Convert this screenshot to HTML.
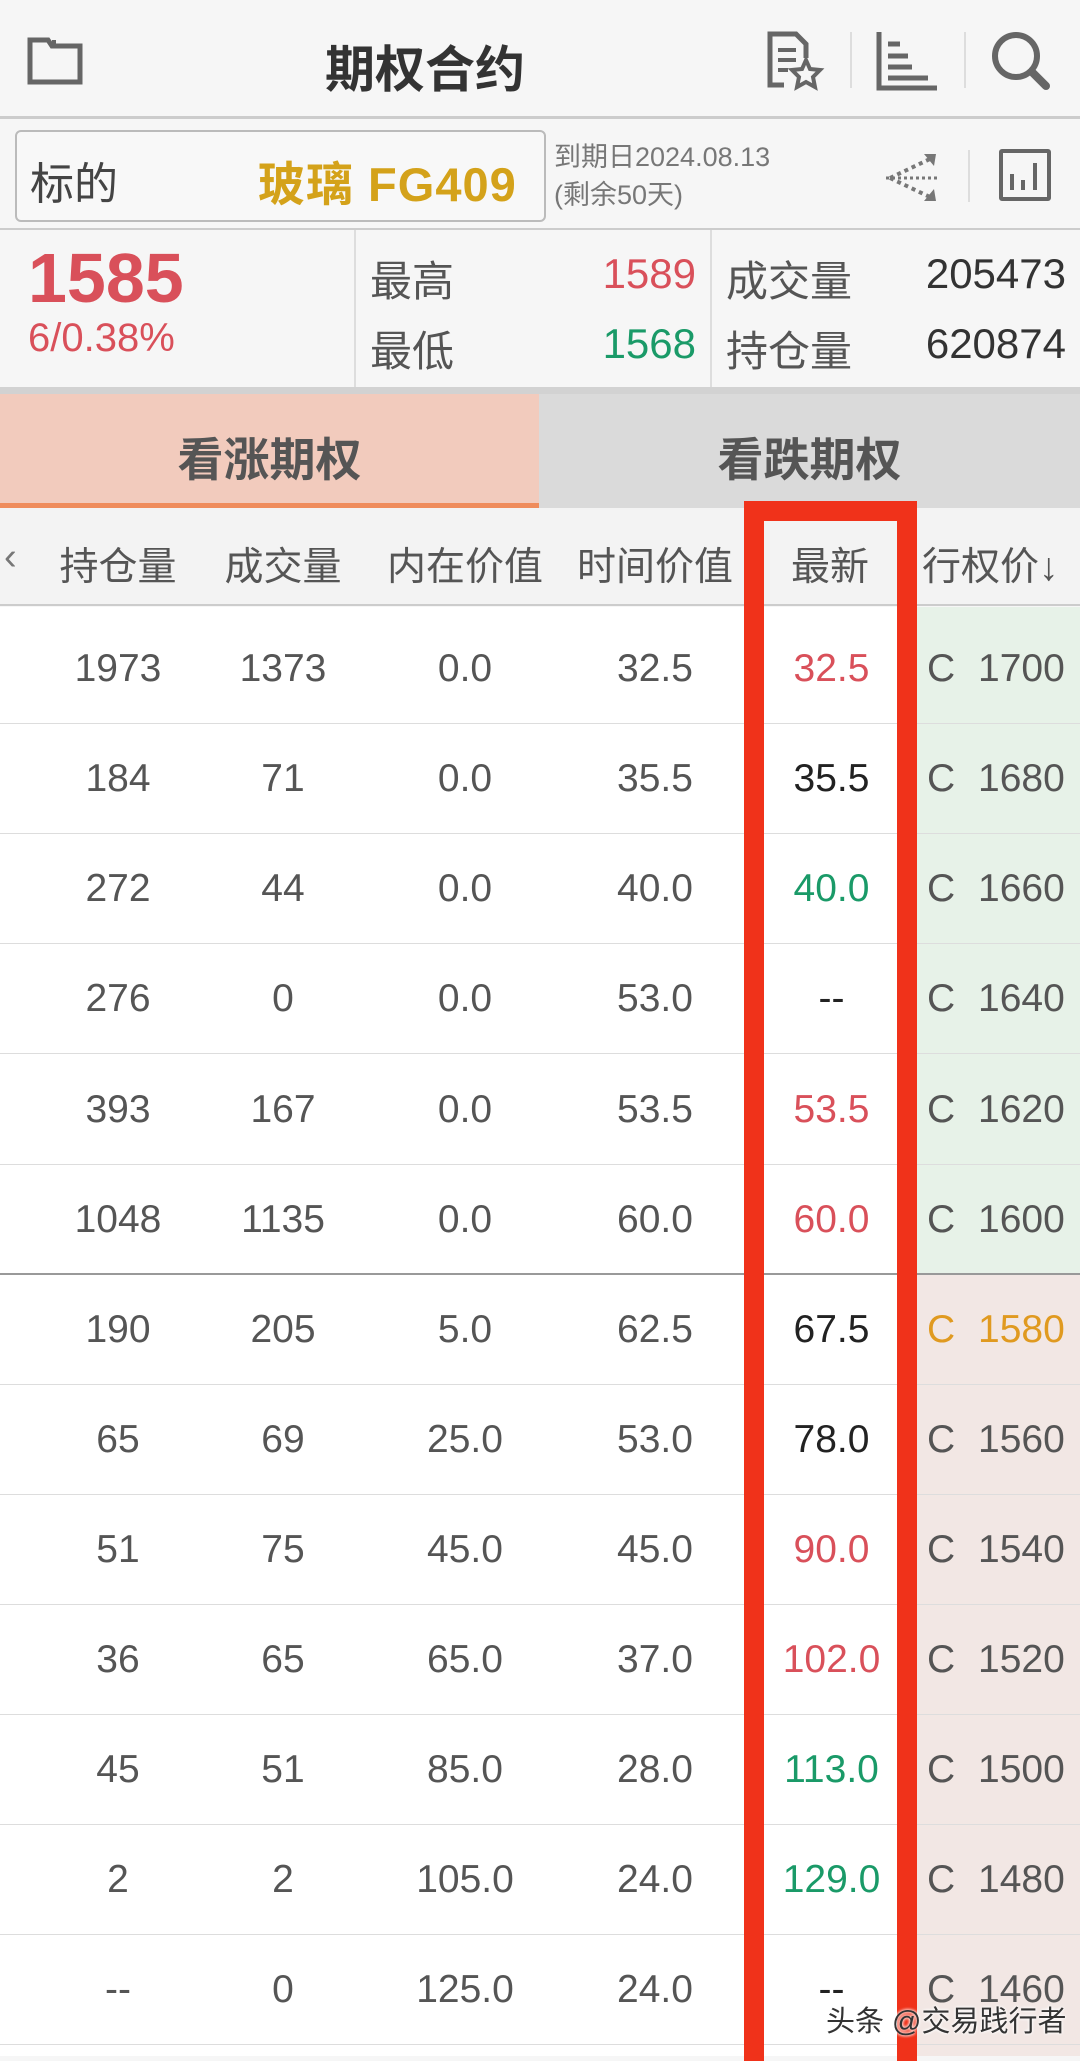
<!DOCTYPE html>
<html><head><meta charset="utf-8"><style>
*{margin:0;padding:0;box-sizing:border-box}
body{width:1080px;height:2056px;background:#f6f6f6;font-family:"Liberation Sans","Noto Sans CJK SC",sans-serif;color:#555;position:relative;overflow:hidden}
.a{position:absolute}
.c{position:absolute;text-align:center;white-space:nowrap}
.row{position:absolute;left:0;width:1080px;height:110px;border-bottom:1.5px solid #ddd;font-size:39px}
.row div{position:absolute;top:0;line-height:110px;text-align:center}
.r{color:#d9505a}.g{color:#1a9a68}.k{color:#222}
</style></head><body>
<!-- header -->
<svg class="a" style="left:26px;top:34px" width="60" height="52" viewBox="0 0 60 52"><path d="M4 6h18l4 6h28v36H4z" fill="none" stroke="#666" stroke-width="5"/><path d="M28 6v8" stroke="#666" stroke-width="4"/></svg>
<div class="c" style="left:0;width:850px;top:30px;font-size:50px;font-weight:bold;color:#333">期权合约</div>
<svg class="a" style="left:766px;top:30px" width="60" height="62" viewBox="0 0 60 62"><path d="M18 55H4V4h26l10 10v14" fill="none" stroke="#666" stroke-width="5"/><path d="M12 20h18M12 30h18M12 40h10" stroke="#666" stroke-width="4"/><path d="M40 30l4 9 10 1-7 7 2 10-9-5-9 5 2-10-7-7 10-1z" fill="none" stroke="#666" stroke-width="4"/></svg>
<div class="a" style="left:850px;top:32px;width:2px;height:56px;background:#ddd"></div>
<svg class="a" style="left:876px;top:30px" width="62" height="62" viewBox="0 0 62 62"><path d="M3 2v56h58" fill="none" stroke="#666" stroke-width="5"/><path d="M12 14h12M12 26h20M12 37h24M12 48h40" stroke="#666" stroke-width="5"/></svg>
<div class="a" style="left:964px;top:32px;width:2px;height:56px;background:#ddd"></div>
<svg class="a" style="left:990px;top:30px" width="62" height="62" viewBox="0 0 62 62"><circle cx="26" cy="26" r="21" fill="none" stroke="#666" stroke-width="6"/><path d="M42 42l14 14" stroke="#666" stroke-width="8" stroke-linecap="round"/></svg>
<div class="a" style="left:0;top:116px;width:1080px;height:3px;background:#ccc"></div>
<!-- underlying -->
<div class="a" style="left:15px;top:130px;width:531px;height:92px;border:2px solid #bbb;border-radius:6px;background:#f8f8f8"></div>
<div class="a" style="left:30px;top:148px;font-size:44px;color:#444">标的</div>
<div class="a" style="left:258px;top:146px;font-size:47px;color:#d4a21a;font-weight:bold;letter-spacing:1px;white-space:nowrap">玻璃 FG409</div>
<div class="a" style="left:554px;top:138px;font-size:27px;color:#777;line-height:38px">到期日2024.08.13<br>(剩余50天)</div>
<svg class="a" style="left:884px;top:150px" width="56" height="55" viewBox="0 0 56 55"><path d="M2 28h52" stroke="#777" stroke-width="3" stroke-dasharray="3 3"/><path d="M6 28L48 8M6 28L48 48" stroke="#777" stroke-width="4" stroke-dasharray="4 4"/><path d="M40 4l12 0-2 12zM40 51l12 0-2-12z" fill="#777"/></svg>
<div class="a" style="left:968px;top:150px;width:2px;height:52px;background:#ddd"></div>
<div class="a" style="left:999px;top:149px;width:52px;height:52px;border:4px solid #666;border-radius:3px"></div>
<div class="a" style="left:1010px;top:174px;width:4px;height:16px;background:#666"></div>
<div class="a" style="left:1021px;top:180px;width:4px;height:10px;background:#666"></div>
<div class="a" style="left:1033px;top:163px;width:4px;height:27px;background:#666"></div>
<div class="a" style="left:0;top:228px;width:1080px;height:2px;background:#ccc"></div>
<!-- stats -->
<div class="a" style="left:28px;top:238px;font-size:70px;font-weight:bold;color:#d9505a">1585</div>
<div class="a" style="left:28px;top:316px;font-size:40px;color:#d9505a">6/0.38%</div>
<div class="a" style="left:354px;top:230px;width:2px;height:158px;background:#ddd"></div>
<div class="a" style="left:710px;top:230px;width:2px;height:158px;background:#ddd"></div>
<div class="a" style="left:370px;top:248px;font-size:42px;color:#555">最高</div>
<div class="a" style="left:370px;top:318px;font-size:42px;color:#555">最低</div>
<div class="a" style="left:560px;width:136px;text-align:right;top:250px;font-size:42px;color:#d9505a">1589</div>
<div class="a" style="left:560px;width:136px;text-align:right;top:320px;font-size:42px;color:#1a9a68">1568</div>
<div class="a" style="left:726px;top:248px;font-size:42px;color:#555">成交量</div>
<div class="a" style="left:726px;top:318px;font-size:42px;color:#555">持仓量</div>
<div class="a" style="left:880px;width:186px;text-align:right;top:250px;font-size:42px;color:#333">205473</div>
<div class="a" style="left:880px;width:186px;text-align:right;top:320px;font-size:42px;color:#333">620874</div>
<div class="a" style="left:0;top:387px;width:1080px;height:7px;background:#d2d2d2"></div>
<!-- tabs -->
<div class="a" style="left:0;top:394px;width:539px;height:114px;background:#f2cbbd"></div>
<div class="a" style="left:0;top:503px;width:539px;height:5px;background:#ef8c5c"></div>
<div class="a" style="left:539px;top:394px;width:541px;height:114px;background:#dadada"></div>
<div class="c" style="left:0;width:539px;top:424px;font-size:46px;font-weight:bold;color:#555">看涨期权</div>
<div class="c" style="left:539px;width:541px;top:424px;font-size:46px;font-weight:bold;color:#555">看跌期权</div>
<!-- column header -->
<div class="a" style="left:0;top:508px;width:1080px;height:98px;background:#f3f3f3;border-bottom:2px solid #ccc"></div>
<div class="a" style="left:4px;top:536px;font-size:38px;color:#777">‹</div>
<div class="c" style="left:48px;width:140px;top:536px;font-size:39px">持仓量</div>
<div class="c" style="left:213px;width:140px;top:536px;font-size:39px">成交量</div>
<div class="c" style="left:380px;width:170px;top:536px;font-size:39px">内在价值</div>
<div class="c" style="left:570px;width:170px;top:536px;font-size:39px">时间价值</div>
<div class="c" style="left:760px;width:140px;top:536px;font-size:39px">最新</div>
<div class="a" style="left:922px;top:536px;font-size:39px;white-space:nowrap">行权价↓</div>
<!-- rows -->
<div class="a" style="left:0;top:607px;width:1080px;height:1449px;background:#fff"></div>
<div class="a" style="left:917px;top:607px;width:163px;height:666px;background:#e7f2e8"></div>
<div class="a" style="left:917px;top:1273px;width:163px;height:783px;background:#f2e7e4"></div>

<div class="row" style="top:614px"><div style="left:48px;width:140px">1973</div><div style="left:213px;width:140px">1373</div><div style="left:390px;width:150px">0.0</div><div style="left:580px;width:150px">32.5</div><div class="r" style="left:764px;width:135px">32.5</div><div style="left:927px">C</div><div style="left:978px">1700</div></div>
<div class="row" style="top:724px"><div style="left:48px;width:140px">184</div><div style="left:213px;width:140px">71</div><div style="left:390px;width:150px">0.0</div><div style="left:580px;width:150px">35.5</div><div class="k" style="left:764px;width:135px">35.5</div><div style="left:927px">C</div><div style="left:978px">1680</div></div>
<div class="row" style="top:834px"><div style="left:48px;width:140px">272</div><div style="left:213px;width:140px">44</div><div style="left:390px;width:150px">0.0</div><div style="left:580px;width:150px">40.0</div><div class="g" style="left:764px;width:135px">40.0</div><div style="left:927px">C</div><div style="left:978px">1660</div></div>
<div class="row" style="top:944px"><div style="left:48px;width:140px">276</div><div style="left:213px;width:140px">0</div><div style="left:390px;width:150px">0.0</div><div style="left:580px;width:150px">53.0</div><div class="k" style="left:764px;width:135px">--</div><div style="left:927px">C</div><div style="left:978px">1640</div></div>
<div class="row" style="top:1055px"><div style="left:48px;width:140px">393</div><div style="left:213px;width:140px">167</div><div style="left:390px;width:150px">0.0</div><div style="left:580px;width:150px">53.5</div><div class="r" style="left:764px;width:135px">53.5</div><div style="left:927px">C</div><div style="left:978px">1620</div></div>
<div class="row" style="top:1165px;border-bottom:2px solid #999"><div style="left:48px;width:140px">1048</div><div style="left:213px;width:140px">1135</div><div style="left:390px;width:150px">0.0</div><div style="left:580px;width:150px">60.0</div><div class="r" style="left:764px;width:135px">60.0</div><div style="left:927px">C</div><div style="left:978px">1600</div></div>
<div class="row" style="top:1275px"><div style="left:48px;width:140px">190</div><div style="left:213px;width:140px">205</div><div style="left:390px;width:150px">5.0</div><div style="left:580px;width:150px">62.5</div><div class="k" style="left:764px;width:135px">67.5</div><div style="left:927px;color:#e09a20">C</div><div style="left:978px;color:#e09a20">1580</div></div>
<div class="row" style="top:1385px"><div style="left:48px;width:140px">65</div><div style="left:213px;width:140px">69</div><div style="left:390px;width:150px">25.0</div><div style="left:580px;width:150px">53.0</div><div class="k" style="left:764px;width:135px">78.0</div><div style="left:927px">C</div><div style="left:978px">1560</div></div>
<div class="row" style="top:1495px"><div style="left:48px;width:140px">51</div><div style="left:213px;width:140px">75</div><div style="left:390px;width:150px">45.0</div><div style="left:580px;width:150px">45.0</div><div class="r" style="left:764px;width:135px">90.0</div><div style="left:927px">C</div><div style="left:978px">1540</div></div>
<div class="row" style="top:1605px"><div style="left:48px;width:140px">36</div><div style="left:213px;width:140px">65</div><div style="left:390px;width:150px">65.0</div><div style="left:580px;width:150px">37.0</div><div class="r" style="left:764px;width:135px">102.0</div><div style="left:927px">C</div><div style="left:978px">1520</div></div>
<div class="row" style="top:1715px"><div style="left:48px;width:140px">45</div><div style="left:213px;width:140px">51</div><div style="left:390px;width:150px">85.0</div><div style="left:580px;width:150px">28.0</div><div class="g" style="left:764px;width:135px">113.0</div><div style="left:927px">C</div><div style="left:978px">1500</div></div>
<div class="row" style="top:1825px"><div style="left:48px;width:140px">2</div><div style="left:213px;width:140px">2</div><div style="left:390px;width:150px">105.0</div><div style="left:580px;width:150px">24.0</div><div class="g" style="left:764px;width:135px">129.0</div><div style="left:927px">C</div><div style="left:978px">1480</div></div>
<div class="row" style="top:1935px"><div style="left:48px;width:140px">--</div><div style="left:213px;width:140px">0</div><div style="left:390px;width:150px">125.0</div><div style="left:580px;width:150px">24.0</div><div class="k" style="left:764px;width:135px">--</div><div style="left:927px">C</div><div style="left:978px">1460</div></div>

<!-- red box -->
<div class="a" style="left:744px;top:501px;width:173px;height:1560px;border:20px solid #f0321a;border-bottom:none"></div>
<div class="a" style="left:826px;top:1998px;font-size:29px;color:#333;text-shadow:0 0 3px #fff,0 0 3px #fff">头条 @交易践行者</div>
</body></html>
